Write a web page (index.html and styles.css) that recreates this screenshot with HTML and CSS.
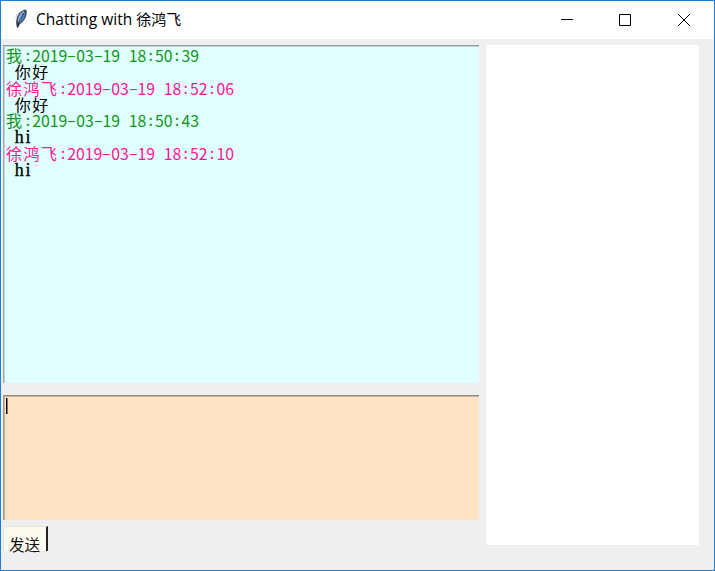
FILE: index.html
```html
<!DOCTYPE html>
<html lang="zh-CN">
<head>
<meta charset="utf-8">
<title>Chatting with 徐鸿飞</title>
<link rel="stylesheet" href="styles.css">
</head>
<body>
<div class="window">
  <header class="titlebar">
    <svg class="feather" width="14" height="20" viewBox="0 0 14 20">
      <path d="M3 18.500C1 12 3 6 7 2.500L10.500.5 12.500 1C13.500 6 11 12 6 15L4 18.500Z" fill="#3a4654"/>
      <path d="M4 13C3.500 8 6 4 10.500 1.500L9 7 5.500 14Z" fill="#86b4e4"/>
      <path d="M11 2.500C12 6 10 11 6 14L8 8Z" fill="#4a80bc"/>
      <path d="M9.500 4 5 13 3.500 18.500" fill="none" stroke="#17202c" stroke-width=".8"/>
      <path d="M2 9C2 6.500 4 4 6 3" fill="none" stroke="#aaa" stroke-width=".8"/>
    </svg>
    <h1 class="title"><span class="latin">Chatting with</span> 徐鸿飞</h1>
    <div class="controls">
      <svg width="58" height="38" viewBox="0 0 58 38"><path d="M20 18.500h12" stroke="#000"/></svg>
      <svg width="58" height="38" viewBox="0 0 58 38"><path d="M20.500 13.500h11v11h-11z" fill="none" stroke="#000"/></svg>
      <svg width="57" height="38" viewBox="0 0 57 38"><path d="M21 13 33 25M33 13 21 25" fill="none" stroke="#000" stroke-width="1"/></svg>
    </div>
  </header>
  <main class="content">
    <section class="left">
      <div class="log">
        <div class="line me"><span class="han">我</span><i>:</i>2019<i class="dash">-</i>03<i class="dash">-</i>19<i> </i>18<i>:</i>50<i>:</i>39</div>
        <div class="line"><i> </i><span class="han">你好</span></div>
        <div class="line peer"><span class="han">徐鸿飞</span><i>:</i>2019<i class="dash">-</i>03<i class="dash">-</i>19<i> </i>18<i>:</i>52<i>:</i>06</div>
        <div class="line"><i> </i><span class="han">你好</span></div>
        <div class="line me"><span class="han">我</span><i>:</i>2019<i class="dash">-</i>03<i class="dash">-</i>19<i> </i>18<i>:</i>50<i>:</i>43</div>
        <div class="line word"><i> </i><i>h</i><i>i</i></div>
        <div class="line peer"><span class="han">徐鸿飞</span><i>:</i>2019<i class="dash">-</i>03<i class="dash">-</i>19<i> </i>18<i>:</i>52<i>:</i>10</div>
        <div class="line word"><i> </i><i>h</i><i>i</i></div>
      </div>
      <div class="input"><div class="caret"></div></div>
      <div class="send">发送</div>
    </section>
    <aside class="panel"></aside>
  </main>
</div>
</body>
</html>
```
FILE: styles.css
```css
* { box-sizing: border-box; }
body { margin: 0; }
.window {
  width: 715px;
  height: 571px;
  border: 1px solid #1a80d6;
  background: #efefef;
  display: flex;
  flex-direction: column;
  overflow: hidden;
}
.titlebar {
  height: 38px;
  background: #fff;
  display: flex;
  align-items: center;
  flex: none;
}
.feather { margin: -2px 0 0 13px; }
.title {
  margin: -2px 0 0 8px;
  font: 400 15px/38px "Open Sans", "Noto Sans CJK SC", sans-serif;
  white-space: pre;
  color: #000;
}
.latin { font-size: 15.5px; letter-spacing: 0.05px; }
.controls { display: flex; margin-left: auto; }
.content { display: flex; padding: 6px 0 0 2px; }
.left { width: 476px; }
.log {
  height: 338px;
  padding: 1px 0 0 2px;
  background: #e0ffff;
  border-top: 1px solid #8c9c9c;
  border-left: 1px solid #9dabab;
  font: 400 15.8px/16.25px "Noto Sans CJK SC", sans-serif;
  box-shadow: inset 1px 1px #c0d4d4;
}
.line {
  height: 16.25px;
  white-space: pre;
  color: #000;
}
.line i {
  display: inline-block;
  width: 8.77px;
  height: 16.25px;
  font-style: normal;
  text-align: center;
  vertical-align: top;
}
.line .dash { transform: scaleX(1.7); }
.han { font-size: 16px; letter-spacing: 1.5px; }
.me { color: #109618; }
.peer { color: #ff1493; }
.word {
  padding-top: 1px;
  font-family: "Liberation Serif", serif;
  font-size: 18px;
  -webkit-text-stroke: 0.3px #000;
}
.input {
  height: 125px;
  margin-top: 12px;
  padding: 2px 0 0 2px;
  background: #ffe4c4;
  border-top: 1px solid #9a8a78;
  border-left: 1px solid #a89a8a;
  box-shadow: inset 1px 1px #c8b49c;
}
.caret { width: 1px; height: 16px; background: #000; box-shadow: 1px 0 #8a7a68; }
.send {
  width: 45px;
  height: 25px;
  margin-top: 6px;
  background: #fffaf0;
  border: 1px solid #e8e5df;
  border-right: 2px solid #222;
  border-bottom: 0;
  font: 400 15.5px/34px "Noto Sans CJK SC", sans-serif;
  padding-left: 5px;
  color: #111;
}
.panel {
  width: 213px;
  height: 500px;
  margin-left: 7px;
  background: #fff;
  border-left: 1px solid #f8f8f8;
}
```
